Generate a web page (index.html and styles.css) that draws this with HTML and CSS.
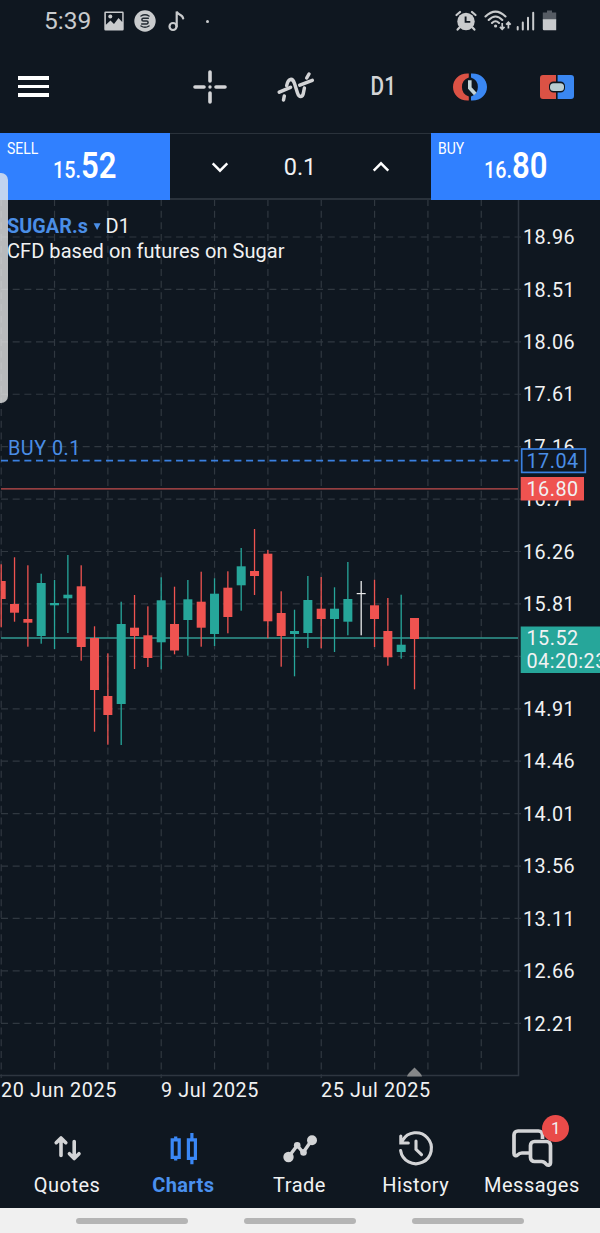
FILE: index.html
```html
<!DOCTYPE html>
<html lang="en">
<head>
  <meta charset="UTF-8" />
  <meta name="viewport" content="width=device-width, initial-scale=1.0" />
  <title>SUGAR.s D1</title>
  <link rel="stylesheet" href="styles.css">
</head>
<body>
  <div class="status">
    <span class="time">5:39</span>
    <svg class="st-picture" width="20" height="20" viewBox="0 0 20 20">
      <path fill="#c9cbcd" d="M1.500 .5h17a1.200 1.200 0 0 1 1.200 1.200v16.600a1.200 1.200 0 0 1-1.200 1.200h-17A1.200 1.200 0 0 1 .3 18.300V1.700A1.200 1.200 0 0 1 1.500 .5z"/>
      <path fill="#0f1720" d="M1.900 2h16.300v9l-3.700-4-4.500 6-3.500-3.600-4.600 4.300z"/>
      <circle cx="6.300" cy="5.500" r="2" fill="#c9cbcd"/>
    </svg>
    <svg class="st-coin" width="22" height="22" viewBox="0 0 22 22">
      <circle cx="11" cy="11" r="10.700" fill="#c9cbcd"/>
      <path d="M7 6Q11 3.300 15 6M7 16Q11 18.700 15 16M14.300 8.300H9.300a1.400 1.400 0 0 0 0 2.800h3.400a1.400 1.400 0 0 1 0 2.800H7.700" fill="none" stroke="#222a32" stroke-width="1.500" stroke-linecap="round"/>
    </svg>
    <svg class="st-note" width="18" height="22" viewBox="0 0 18 22">
      <circle cx="5" cy="16.500" r="3.500" fill="none" stroke="#c9cbcd" stroke-width="2.200"/>
      <path d="M8.700 16.500V1.500c.6 3.600 5.800 2.300 6.500 7" fill="none" stroke="#c9cbcd" stroke-width="2.200" stroke-linecap="round"/>
    </svg>
    <span class="st-dot"></span>
    <div class="st-right">
      <svg width="22" height="22" viewBox="0 0 22 22">
        <circle cx="11" cy="11.500" r="8.700" fill="#c9cbcd"/>
        <path d="M1.500 5 5 2M20.500 5 17 2M4.500 17.500 2.600 19.600M17.500 17.500l1.900 2.100" stroke="#c9cbcd" stroke-width="2.200" stroke-linecap="round"/>
        <path d="M10.600 6.500v5.400h4.700" fill="none" stroke="#0f1720" stroke-width="1.900"/>
      </svg>
      <svg width="28" height="22" viewBox="0 0 28 22">
        <path d="M1.500 6.500Q11.500-3.300 21.500 6.500M4.700 10Q11.500 3 18.300 10M8 13Q11.500 9.500 15 13" fill="none" stroke="#c9cbcd" stroke-width="2.100" stroke-linecap="round"/>
        <circle cx="11.600" cy="16" r="1.600" fill="#c9cbcd"/>
        <path d="M18.200 13v5.500M15.900 16.800l2.300 2.500 2.300-2.500M24.400 18.500V13M22.100 14.700l2.300-2.500 2.300 2.500" fill="none" stroke="#c9cbcd" stroke-width="1.700"/>
      </svg>
      <svg width="19" height="22" viewBox="0 0 19 22">
        <path d="M1.700 17v2.500M6.800 12.500v7M12 7.700v11.800M17.200 2.700v16.800" stroke="#c9cbcd" stroke-width="2" stroke-linecap="round"/>
      </svg>
      <svg width="16" height="22" viewBox="0 0 16 22">
        <path d="M5 .5h5v2h4.200v8H.8v-8H5z" fill="#565c64"/>
        <path d="M.8 9.300h13.400v11H2a1.200 1.200 0 0 1-1.200-1.200z" fill="#c9cbcd"/>
      </svg>
    </div>
  </div>

  <div class="toolbar">
    <button class="menu" aria-label="Menu"><i></i><i></i><i></i></button>
    <div class="tools">
      <button aria-label="Crosshair">
        <svg width="36" height="36" viewBox="0 0 36 36">
          <path d="M18 3v9M18 24v9M3 18h9M24 18h9" stroke="#d3d4d6" stroke-width="3.600" stroke-linecap="round"/>
          <circle cx="18" cy="18" r="1.700" fill="#d3d4d6"/>
        </svg>
      </button>
      <button aria-label="Indicators">
        <svg width="40" height="36" viewBox="0 0 40 36">
          <path d="M6.500 31l.8-4M9.700 16.500C11.300 9 15.500 8.500 17.500 14.500l3 9.500c1.700 5 5.300 4.500 6-.5l.9-4.500M29.700 9l2.300-4" fill="none" stroke="#d3d4d6" stroke-width="3.500" stroke-linecap="round"/>
          <path d="M2.300 23.200l11.200-4.900M22.800 16.200 35.300 11.300" stroke="#d3d4d6" stroke-width="3.500" stroke-linecap="round"/>
        </svg>
      </button>
      <button class="tf"><span>D1</span></button>
      <button aria-label="One click trading">
        <svg width="36" height="30" viewBox="0 0 36 30">
          <path d="M16.800 1.500v4a10 10 0 0 0 0 19v4h-1.500C7 28.500 1 22.500 1 15S7 1.500 15.300 1.500z" fill="#db5245"/>
          <path d="M19 1.500v4a10 10 0 0 1 0 19v4h1.500C29 28.500 35 22.500 35 15S29 1.500 20.500 1.500z" fill="#3a87f2"/>
          <path d="M17.800 8.300v7.700l5.500 6" fill="none" stroke="#c3d3d8" stroke-width="3.600"/>
        </svg>
      </button>
      <button aria-label="New order">
        <svg width="36" height="26" viewBox="0 0 36 26">
          <path d="M17 1v6.500h-2.500a4.500 4.500 0 0 0-4.500 4.500v2a4.500 4.500 0 0 0 4.500 4.500H17V25H4a3 3 0 0 1-3-3V4a3 3 0 0 1 3-3z" fill="#db5245"/>
          <path d="M18.600 1v6.500h2.900a4.500 4.500 0 0 1 4.500 4.500v2a4.500 4.500 0 0 1-4.500 4.500h-2.900V25H32a3 3 0 0 0 3-3V4a3 3 0 0 0-3-3z" fill="#3a87f2"/>
          <rect x="11" y="9.300" width="14" height="7.600" rx="3.500" fill="#b9cdd2"/>
        </svg>
      </button>
    </div>
  </div>

  <div class="deal">
    <button class="price sell"><span class="side">SELL</span><span class="quote">15.<b>52</b></span></button>
    <div class="volume">
      <svg width="18" height="12" viewBox="0 0 18 12"><path d="M1.700 2.300 9 9.700l7.300-7.400" /></svg>
      <span>0.1</span>
      <svg width="18" height="12" viewBox="0 0 18 12"><path d="M1.700 9.700 9 2.300l7.300 7.400" /></svg>
    </div>
    <button class="price buy"><span class="side">BUY</span><span class="quote">16.<b>80</b></span></button>
  </div>

  <div class="chart">
    <svg id="chart" width="600" height="904" viewBox="0 200 600 904">
      <g id="grid"></g>
      <path class="axis" d="M518.500 200V1075.500H0"/>
      <g id="labels"></g>
      <path class="shift" d="M407 1076.500q0-1.500 2-3.500l5.500-5.500 5.500 5.500q2 2 2 3.500z"/>
      <path class="line-bid" d="M1 638H518"/>
      <path class="line-ask" d="M1 488.900H518"/>
      <path class="line-order" d="M1 460.700H518"/>
      <g id="candles"></g>
      <text class="order" x="8" y="455.300">BUY 0.1</text>
      <rect class="tag-order" x="521.700" y="449" width="63.600" height="23.400"/>
      <text class="order" x="526.500" y="467.700">17.04</text>
      <rect class="tag-ask" x="520.700" y="477" width="63.300" height="23.500"/>
      <text x="526.500" y="495.700">16.80</text>
      <rect class="tag-bid" x="520.700" y="626.500" width="80" height="46.500"/>
      <text x="526.500" y="645">15.52</text>
      <text x="526.500" y="668.300">04:20:23</text>
      <text class="symbol" x="7" y="233">SUGAR.s</text>
      <path d="M93.600 223.300h7l-3.500 6.700z" fill="#4a8ee6"/>
      <text class="head" x="105.500" y="233">D1</text>
      <text class="head" x="7" y="257.500">CFD based on futures on Sugar</text>
    </svg>
  </div>

  <div class="tabs">
    <a class="tab">
      <svg width="44" height="44" viewBox="0 0 44 44">
        <path d="M16 29.500V12.500M11.200 16.700l4.800-4.800 4.800 4.800M29.200 15.500v16.500M24.400 27.700l4.800 4.800 4.800-4.800" fill="none" stroke="#d3d4d6" stroke-width="3.600" stroke-linecap="round" stroke-linejoin="round"/>
      </svg>
      <span>Quotes</span>
    </a>
    <a class="tab active">
      <svg width="44" height="44" viewBox="0 0 44 44">
        <path d="M11.200 13.800h7v17.500h-7zM14.700 10.500v3M14.700 31.500v3M27.400 13.800h7v18.500h-7zM30.900 7v6M30.900 33v5.300" fill="none" stroke="#3a87f5" stroke-width="3.200"/>
      </svg>
      <span>Charts</span>
    </a>
    <a class="tab">
      <svg width="44" height="44" viewBox="0 0 44 44">
        <path d="M10.500 31l8.700-11.500 6 7 8.300-12" fill="none" stroke="#d3d4d6" stroke-width="3.400"/>
        <g fill="#d3d4d6"><circle cx="10.500" cy="31" r="5.200"/><circle cx="19.200" cy="19.300" r="3.300"/><circle cx="25.500" cy="26.500" r="3.300"/><circle cx="34" cy="14.300" r="5"/></g>
      </svg>
      <span>Trade</span>
    </a>
    <a class="tab">
      <svg width="44" height="44" viewBox="0 0 44 44">
        <path d="M6.600 24.500A15.500 15.500 0 1 0 8.500 14.500M6.800 10v7h7.500M22 15v8.300l5.500 5.300" fill="none" stroke="#d3d4d6" stroke-width="3.100" stroke-linecap="round"/>
      </svg>
      <span>History</span>
    </a>
    <a class="tab">
      <svg width="44" height="44" viewBox="0 0 44 44">
        <path d="M32.500 13V9A4 4 0 0 0 28.500 5H8A4 4 0 0 0 4 9V27.500c0 2 2 3 3.500 1.500s2.500-2 4.500-2H19" fill="none" stroke="#d3d4d6" stroke-width="3.700"/>
        <path d="M24.500 15.500h12a4 4 0 0 1 4 4V36.500c0 3-3 3.500-4.500 1.500s-2.500-2.500-4.500-2.500H24.500a4 4 0 0 1-4-4V19.500a4 4 0 0 1 4-4z" fill="none" stroke="#d3d4d6" stroke-width="3.700"/>
      </svg>
      <span>Messages</span>
      <em class="badge">1</em>
    </a>
  </div>

  <div class="sysnav"><i></i><i></i><i></i></div>
  <div class="edge"></div>

  <script>
    const NS = 'http://www.w3.org/2000/svg';

    function add(parent, tag, attrs, text) {
      const el = document.createElementNS(NS, tag);
      for (const k in attrs) el.setAttribute(k, attrs[k]);
      if (text) el.textContent = text;
      document.getElementById(parent).appendChild(el);
    }

    // price rows, the bid tag takes the place of the 15.36 label
    for (let i = 0; i < 16; i++) {
      const y = 237 + i * 52.42;
      add('grid', 'path', { d: 'M1 ' + y + 'H521' });
      if (i !== 8) add('labels', 'text', { x: 523, y: y + 7.2 }, (18.96 - i * 0.45).toFixed(2));
    }

    // time columns
    for (let i = 0; i < 10; i++) {
      const x = 1.2 + i * 53.34;
      add('grid', 'path', { d: 'M' + x + ' 199V' + (i % 3 === 0 && i < 9 ? 1078 : 1070) });
    }
    ['20 Jun 2025', '9 Jul 2025', '25 Jul 2025'].forEach((t, i) => {
      add('labels', 'text', { class: 'date', x: 1 + i * 160, y: 1096.7 }, t);
    });

    // [high, low, body top, body bottom, direction]
    const candles = [
      [564.3, 627.3, 581, 599, 'down'],
      [557.3, 621.7, 604, 612.7, 'down'],
      [565.3, 646.7, 619, 622.7, 'down'],
      [573.7, 643.7, 583, 636, 'up'],
      [580, 649, 603, 605.3, 'up'],
      [555, 633, 594.7, 598.3, 'up'],
      [565.3, 660.7, 586.3, 647, 'down'],
      [626.3, 731.7, 638, 690, 'down'],
      [653.3, 744.7, 696, 715, 'down'],
      [601.7, 745, 624, 704, 'up'],
      [595, 669, 627.7, 636, 'down'],
      [606.3, 667, 635.3, 658, 'down'],
      [577.3, 669.3, 600.3, 642.3, 'up'],
      [586.7, 654.3, 624, 650.5, 'down'],
      [580, 655.7, 599.3, 620, 'up'],
      [571.7, 646.7, 601.7, 627.7, 'down'],
      [578.3, 646, 593.7, 634, 'up'],
      [571.3, 633.3, 587.7, 617, 'down'],
      [548, 610.7, 566.3, 585.3, 'up'],
      [529, 595, 571, 576, 'down'],
      [550, 638.3, 553.7, 621.3, 'down'],
      [591.3, 666.7, 613, 636, 'down'],
      [609.7, 676.3, 631, 634, 'up'],
      [576, 648, 600, 633, 'up'],
      [577, 648.3, 608.7, 619, 'down'],
      [587.3, 652, 608.7, 619, 'up'],
      [562, 635.3, 599, 621.7, 'up'],
      [581, 635.3, 593, 594.2, 'flat'],
      [579.7, 647, 605.3, 619, 'down'],
      [598, 665.7, 631, 657.3, 'down'],
      [594.7, 658.7, 644.7, 652, 'up'],
      [618, 689.3, 618, 639, 'down']
    ];
    candles.forEach(([high, low, top, bottom, dir], i) => {
      const x = 1.2 + i * 13.333;
      const left = Math.max(1, x - 4.5);
      add('candles', 'rect', { class: dir, x: x - 0.65, y: high, width: 1.3, height: low - high });
      add('candles', 'rect', { class: dir, x: left, y: top, width: x + 4.5 - left, height: bottom - top });
    });
  </script>
</body>
</html>
```
FILE: styles.css
```css
html, body {
  margin: 0;
  background-color: #0f1720;
}

body {
  position: relative;
  width: 600px;
  height: 1233px;
  display: flex;
  flex-direction: column;
  overflow: hidden;
  font-family: Roboto, sans-serif;
  color: #f1f2f3;
}

svg {
  display: block;
}

button {
  background: none;
  border: none;
  padding: 0;
  color: inherit;
  font-family: inherit;
}

.status {
  height: 42px;
  box-sizing: border-box;
  padding: 0 42px 0 44px;
  display: flex;
  align-items: center;
  color: #c9cbcd;
}

.time {
  width: 59.500px;
  font-size: 24.500px;
  line-height: 42px;
}

.st-coin { margin-left: 10.500px; }
.st-note { margin-left: 12px; }

.st-dot {
  width: 3px;
  height: 3px;
  margin-left: 20px;
  border-radius: 50%;
  background: #c9cbcd;
}

.st-right {
  margin-left: auto;
  display: flex;
  gap: 7px;
}

.st-right svg:nth-child(3) { margin-left: -3px; }

.toolbar {
  height: 89px;
  margin-bottom: 2px;
  display: flex;
  align-items: center;
}

.menu {
  width: 31px;
  margin-left: 18px;
  display: flex;
  flex-direction: column;
  gap: 5px;
}

.menu i {
  height: 3.600px;
  background: #fff;
}

.tools {
  margin-left: 118px;
  display: flex;
}

.tools button {
  width: 86.700px;
  height: 40px;
  display: flex;
  align-items: center;
  justify-content: center;
}

.tools .tf {
  font-size: 25px;
  font-weight: 500;
  color: #d3d4d6;
}

/* narrow lettering */
.tf span {
  transform: scaleX(.83);
}

.deal {
  height: 67px;
  display: flex;
}

.price {
  width: 169.500px;
  position: relative;
  background: #3080ff;
  color: #fff;
}

.side {
  position: absolute;
  left: 7px;
  top: 6px;
  font-size: 17px;
  line-height: 18px;
  transform: scaleX(.82);
  transform-origin: left;
}

.quote {
  display: block;
  font-size: 23.500px;
  font-weight: 500;
  line-height: 44px;
  transform: translateY(1px) scaleX(.84);
}

.quote b {
  font-size: 37px;
  font-weight: 600;
}

.volume {
  flex: 1;
  display: flex;
  align-items: center;
  justify-content: space-between;
  padding: 2px 41px 0;
  border-top: 1.500px solid #2a323b;
  border-bottom: 2px solid #2a323b;
  font-size: 23.500px;
}

.volume path {
  fill: none;
  stroke: #fff;
  stroke-width: 2.400;
}

.chart {
  height: 904px;
}

.chart text {
  font-size: 19.800px;
  letter-spacing: .5px;
  fill: #f1f2f3;
}

.chart .date {
  letter-spacing: .6px;
}

.chart .head {
  font-size: 20px;
  letter-spacing: .05px;
}

.chart .symbol {
  fill: #4a8ee6;
  font-weight: 700;
  letter-spacing: .05px;
}

.chart .order {
  fill: #4a8ee6;
}

#grid path {
  fill: none;
  stroke: #303840;
  stroke-width: 1.200;
  stroke-dasharray: 7 4.670;
}

.axis {
  fill: none;
  stroke: #2e3640;
  stroke-width: 1.500;
}

.shift { fill: #858789; }

.line-bid {
  stroke: #329b92;
  stroke-width: 1.300;
}

.line-ask {
  stroke: #c44e4c;
  stroke-width: 1.300;
}

.line-order {
  stroke: #3a80e0;
  stroke-width: 1.700;
  stroke-dasharray: 7 4.670;
}

.up { fill: #26a69a; }
.down { fill: #ef5350; }
.flat { fill: #e8eaea; }

.tag-order {
  fill: #0f1720;
  stroke: #3a80e0;
  stroke-width: 1.700;
}

.tag-ask { fill: #ef5350; }
.tag-bid { fill: #26a69a; }

.tabs {
  height: 104px;
  box-sizing: border-box;
  padding: 22px 10px 0 9px;
  display: flex;
}

.tab {
  flex: 1;
  position: relative;
  display: flex;
  flex-direction: column;
  align-items: center;
  font-size: 20px;
  letter-spacing: .5px;
}

.tab span {
  margin-top: 3px;
  line-height: 24px;
}

.tab.active {
  color: #4a90ee;
  font-weight: 700;
  letter-spacing: .4px;
}

.badge {
  position: absolute;
  left: 68.500px;
  top: -11.500px;
  width: 27px;
  height: 27px;
  border-radius: 50%;
  background: #e94b49;
  font-size: 17px;
  font-style: normal;
  letter-spacing: 0;
  line-height: 27px;
  text-align: center;
}

.sysnav {
  height: 25px;
  display: flex;
  align-items: center;
  justify-content: center;
  gap: 56px;
  background: #f0f0f0;
}

.sysnav i {
  width: 112px;
  height: 6px;
  border-radius: 3px;
  background: #b4b4b4;
}

/* side panel handle */
.edge {
  position: absolute;
  left: 0;
  top: 173px;
  width: 8px;
  height: 230px;
  border-radius: 0 7px 7px 0;
  background: rgba(235, 235, 235, .77);
}
```
